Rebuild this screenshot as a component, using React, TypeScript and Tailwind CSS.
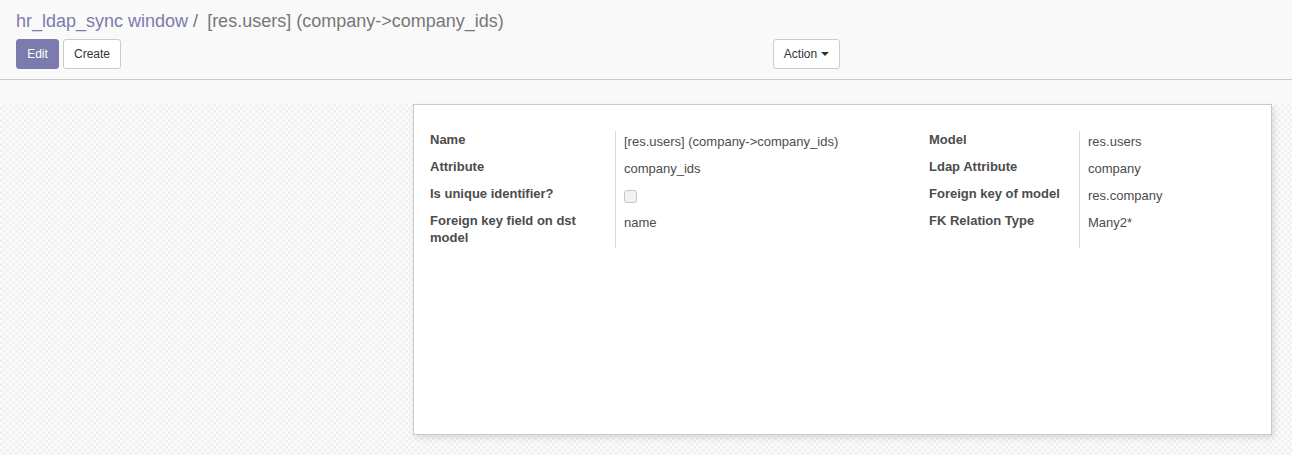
const leftRows = [
  { label: 'Name', value: '[res.users] (company->company_ids)' },
  { label: 'Attribute', value: 'company_ids' },
  { label: 'Is unique identifier?', value: null },
  { label: 'Foreign key field on dst model', value: 'name', tall: true },
]

const rightRows = [
  { label: 'Model', value: 'res.users' },
  { label: 'Ldap Attribute', value: 'company' },
  { label: 'Foreign key of model', value: 'res.company' },
  { label: 'FK Relation Type', value: 'Many2*', tall: true },
]

type Row = { label: string; value: string | null; tall?: boolean }

function Group({ rows, labelWidth, className }: { rows: Row[]; labelWidth: string; className: string }) {
  return (
    <div className={`flex ${className}`}>
      <div className={`${labelWidth} flex flex-col border-r border-[#d9d9d9] pr-2`}>
        {rows.map((r) => (
          <div key={r.label} className={`${r.tall ? 'h-[36px]' : 'h-[27px]'} text-[13px] leading-[17px] font-bold text-[#4c4c4c]`}>
            {r.label}
          </div>
        ))}
      </div>
      <div className="flex flex-1 flex-col pl-2">
        {rows.map((r) => (
          <div key={r.label} className={`${r.tall ? 'h-[36px]' : 'h-[27px]'} pt-[2px] text-[13px] leading-[17px] text-[#4c4c4c]`}>
            {r.value === null ? (
              <span className="mt-[3px] block h-[13px] w-[13px] rounded-[3px] border border-[#c6c6c6] bg-[#f2f2f2]" />
            ) : (
              r.value
            )}
          </div>
        ))}
      </div>
    </div>
  )
}

export default function App() {
  return (
    <div className="h-[455px] overflow-hidden bg-[#f9f9f9] font-['Liberation_Sans',Arial,sans-serif]">
      {/* Control panel */}
      <div className="h-[80px] border-b border-[#cccccc] px-4 pt-[9px]">
        <div className="flex items-baseline text-[18px] leading-[24px]">
          <span className="text-[#7c7bad]">hr_ldap_sync window</span>
          <span className="ml-[5px] text-[#777777]">/</span>
          <span className="ml-[9px] text-[#777777]">[res.users] (company-&gt;company_ids)</span>
        </div>
        <div className="mt-[6px] flex">
          <div className="flex w-[757px] gap-1">
            <button className="h-[30px] w-[43px] rounded-[3px] border border-[#7c7bad] bg-[#7c7bad] text-[12px] text-white">
              Edit
            </button>
            <button className="h-[30px] w-[58px] rounded-[3px] border border-[#cccccc] bg-white text-[12px] text-[#333333]">
              Create
            </button>
          </div>
          <button className="flex h-[30px] w-[67px] items-center justify-center rounded-[3px] border border-[#cccccc] bg-white text-[12px] text-[#333333]">
            Action
            <span className="ml-[4px] h-0 w-0 border-x-[4px] border-t-[4px] border-x-transparent border-t-[#333333]" />
          </button>
        </div>
      </div>

      <div className="h-[24px]" />

      {/* Sheet background */}
      <div className="h-[351px] bg-[repeating-conic-gradient(#f1f1f1_0%_25%,#fbfbfb_0%_50%)] bg-[length:6px_6px]">
        <div className="ml-[413px] h-[331px] w-[859px] border border-[#c8c7d5] bg-white px-4 pt-[26px] shadow-[2px_3px_6px_rgba(0,0,0,0.12)]">
          <div className="flex">
            <Group rows={leftRows} labelWidth="w-[186px]" className="w-[499px]" />
            <Group rows={rightRows} labelWidth="w-[151px]" className="flex-1" />
          </div>
        </div>
      </div>
    </div>
  )
}
